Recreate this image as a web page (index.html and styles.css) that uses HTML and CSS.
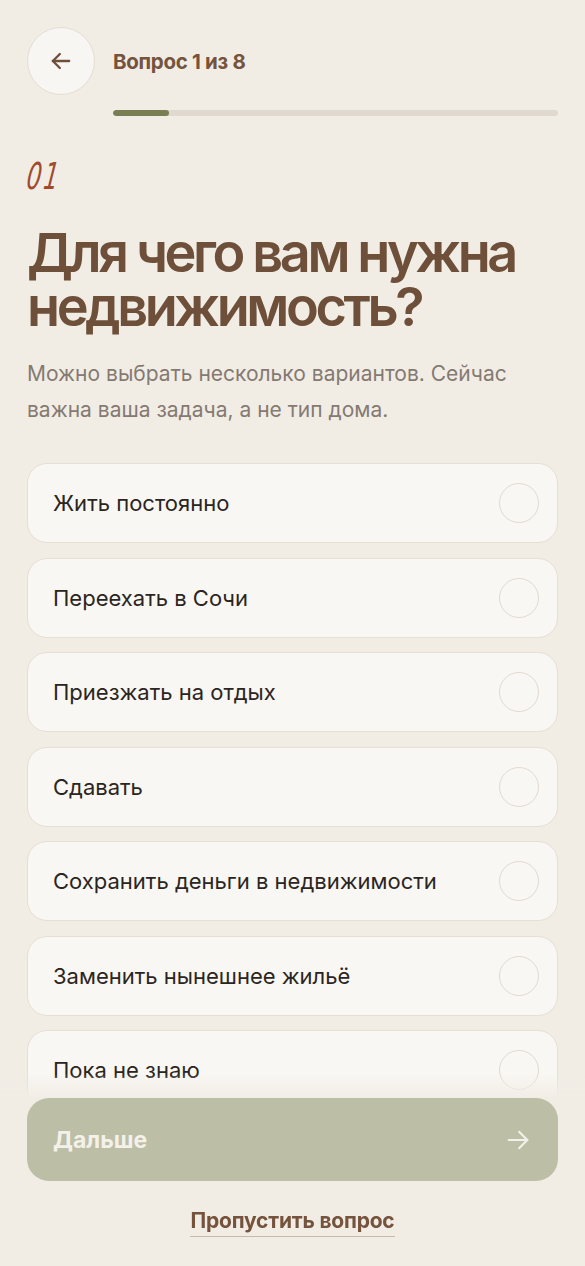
FILE: index.html
```html
<!DOCTYPE html>
<html lang="ru">
<head>
  <meta charset="utf-8">
  <title>Вопрос 1 из 8</title>
  <link rel="stylesheet" href="styles.css">
</head>
<body>
  <div class="page">
    <header class="top">
      <div class="top-row">
        <button class="back" aria-label="Назад">
          <svg width="28" height="28" viewBox="0 0 24 24" fill="none" stroke="currentColor" stroke-width="2" stroke-linecap="round" stroke-linejoin="round">
            <path d="M19 12H5"/>
            <path d="M11 6l-6 6 6 6"/>
          </svg>
        </button>
        <span class="step">Вопрос 1 из 8</span>
      </div>
      <div class="progress"><div class="progress-fill" style="width: 12.5%"></div></div>
    </header>

    <div class="num">01</div>
    <h1 class="title">Для чего вам нужна недвижимость?</h1>
    <p class="hint">Можно выбрать несколько вариантов. Сейчас важна ваша задача, а не тип дома.</p>

    <ul class="options">
      <li class="option">Жить постоянно<span class="check"></span></li>
      <li class="option">Переехать в Сочи<span class="check"></span></li>
      <li class="option">Приезжать на отдых<span class="check"></span></li>
      <li class="option">Сдавать<span class="check"></span></li>
      <li class="option">Сохранить деньги в недвижимости<span class="check"></span></li>
      <li class="option">Заменить нынешнее жильё<span class="check"></span></li>
      <li class="option">Пока не знаю<span class="check"></span></li>
    </ul>
  </div>

  <footer class="bottom">
    <button class="next" disabled>
      <span>Дальше</span>
      <svg width="28" height="28" viewBox="0 0 24 24" fill="none" stroke="currentColor" stroke-width="1.8" stroke-linecap="round" stroke-linejoin="round">
        <path d="M4 12h16"/>
        <path d="M13 5l7 7-7 7"/>
      </svg>
    </button>
    <a class="skip" href="#">Пропустить вопрос</a>
  </footer>
</body>
</html>
```

FILE: styles.css
```css
body {
  margin: 0;
  font-family: Inter, "Noto Sans", sans-serif;
  background-color: #f1ede5;
  color: #2b2522;
}

.page {
  padding: 27px 27px 200px;
}

.top-row {
  display: flex;
  align-items: center;
  gap: 18px;
}

.back {
  width: 68px;
  height: 68px;
  border-radius: 50%;
  border: 1px solid #e5ddd3;
  background-color: #f8f6f2;
  color: #6e4f3a;
  display: flex;
  align-items: center;
  justify-content: center;
  padding: 0;
}

.step {
  font-size: 20.5px;
  font-weight: 700;
  letter-spacing: -0.3px;
  color: #75533d;
}

.progress {
  margin: 15px 0 0 86px;
  height: 6px;
  border-radius: 3px;
  background-color: #e0d9d0;
  overflow: hidden;
}

.progress-fill {
  height: 100%;
  background-color: #7a7e53;
  border-radius: 3px;
}

.num {
  margin-top: 44px;
  font-family: "DejaVu Sans", sans-serif;
  font-style: italic;
  font-weight: 200;
  font-size: 37px;
  line-height: 34px;
  color: #a04a2e;
  letter-spacing: 4px;
  transform: scaleX(0.62) skewX(-12deg);
  transform-origin: left;
}

.title {
  margin: 32px 0 0;
  font-size: 54px;
  line-height: 54px;
  font-weight: 600;
  letter-spacing: -3.4px;
  color: #6e4f3a;
}

.hint {
  margin: 22px 0 0;
  font-size: 21px;
  line-height: 36px;
  color: #857a72;
}

.options {
  list-style: none;
  margin: 35px 0 0;
  padding: 0;
  display: flex;
  flex-direction: column;
  gap: 14.5px;
}

.option {
  height: 80px;
  box-sizing: border-box;
  display: flex;
  align-items: center;
  justify-content: space-between;
  padding: 0 18px 0 25px;
  background-color: #f9f7f3;
  border: 1px solid #e7ded4;
  border-radius: 20px;
  font-size: 22px;
}

.check {
  width: 40px;
  height: 40px;
  box-sizing: border-box;
  border-radius: 50%;
  border: 1.5px solid #e3d9ce;
}

.bottom {
  position: fixed;
  left: 0;
  right: 0;
  bottom: 0;
  padding: 24px 27px 29px;
  background: linear-gradient(to bottom, rgba(241, 237, 229, 0), #f1ede5 24px);
  display: flex;
  flex-direction: column;
  align-items: center;
}

.next {
  width: 100%;
  height: 83px;
  border: none;
  border-radius: 22px;
  background-color: #bcbea6;
  color: #f4f1ea;
  display: flex;
  align-items: center;
  justify-content: space-between;
  padding: 0 26px;
  font-family: inherit;
  font-size: 23px;
  font-weight: 700;
}

.skip {
  margin-top: 28px;
  font-size: 21px;
  line-height: 24px;
  font-weight: 700;
  letter-spacing: -0.2px;
  color: #75533d;
  text-decoration: none;
  border-bottom: 1px solid #c9b9aa;
  padding-bottom: 3px;
}
```
